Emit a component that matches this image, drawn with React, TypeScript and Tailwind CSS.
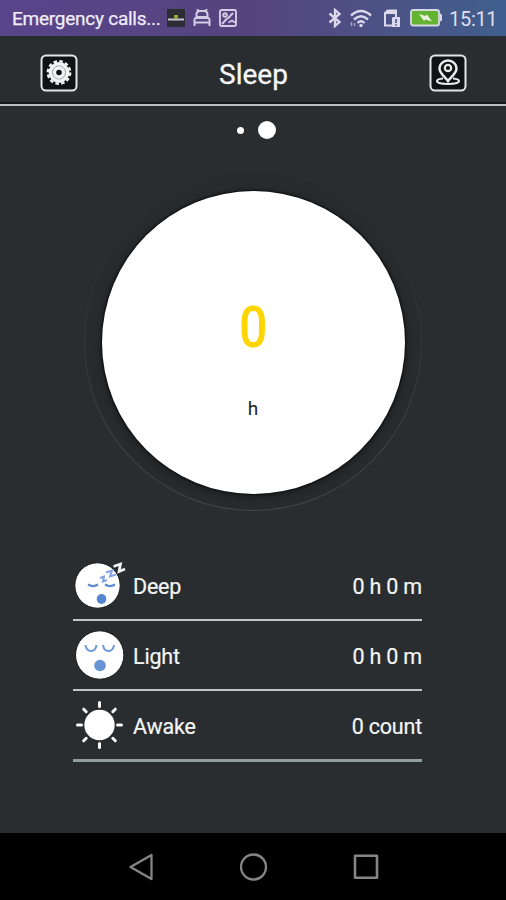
import type { ReactNode } from 'react';

function StatusBar() {
  return (
    <header className="flex h-[36px] shrink-0 items-center bg-linear-to-r from-[#58448a] via-[#55447f] via-50% to-[#3f5f8d] pl-[12px] pr-[9px] text-[#e3def0]">
      <span className="w-[150px] whitespace-nowrap pt-[2px] text-[19px] leading-[36px] tracking-[-0.25px] text-[#f0edf8] [-webkit-text-stroke:0.25px_#f0edf8]">Emergency calls...</span>
      <svg className="ml-[5px]" width="18" height="18" viewBox="0 0 18 18">
        <path d="M0 0h18v18H0z" fill="#2e2c35" />
        <path d="M1 10.5h16" stroke="#c9c6cf" strokeWidth="2" />
        <path d="M7.200 6h3.600v3.500H7.200z" fill="#a4b52e" />
      </svg>
      <svg className="ml-[8px]" width="18" height="18" viewBox="0 0 18 18" fill="none" stroke="#d3cde5" strokeWidth="2">
        <path d="M4 0l2 2.5M14 0l-2 2.500M3.500 8V5.500q0-3.500 3.500-3.500h4q3.500 0 3.500 3.500V8z" />
        <path d="M1.500 17v-6q0-2 2-2h11q2 0 2 2v6M1 13.500h16" />
      </svg>
      <svg className="ml-[8px]" width="18" height="18" viewBox="0 0 18 18" fill="none" stroke="#d3cde5" strokeWidth="1.9">
        <rect x="1" y="1" width="16" height="16" rx="1.5" />
        <circle cx="6" cy="6" r="1.8" />
        <path d="M3 15l4.500-5 2-1L14 4M9.500 13.500l3.500-2 3 2" />
      </svg>
      <div className="flex-1" />
      <svg width="14" height="20" viewBox="0 0 14 20" fill="none" stroke="#dcd9ed" strokeWidth="2.3">
        <path d="M1.500 5.500l10 8.500L7 18V2l4.500 4-10 8.500" />
      </svg>
      <svg className="ml-[7px]" width="24" height="19" viewBox="0 0 24 19" fill="none" stroke="#dcd9ed" strokeWidth="2.4">
        <path d="M2 6.500q10-9 20 0M5 10.500q7-6.500 14 0M8.500 14q3.500-3.500 7 0" />
        <circle cx="12" cy="16.500" r="1.700" fill="#dcd9ed" stroke="none" />
        <path d="M2.500 17v-4M5.500 17v-3" stroke="#a9a3cf" strokeWidth="1.500" />
      </svg>
      <svg className="ml-[10px]" width="18" height="19" viewBox="0 0 18 19">
        <path d="M9 16.500H2V4l3-2.500h8V8" fill="none" stroke="#dcd9ed" strokeWidth="2" />
        <path d="M3 1.500h10V5H3z" fill="#dcd9ed" />
        <path d="M9 9l1-1h7v10H9z" fill="#dcd9ed" />
        <path d="M13 10v4M13 15.200v1.500" stroke="#51518a" strokeWidth="1.600" />
      </svg>
      <svg className="ml-[9px]" width="33" height="18" viewBox="0 0 33 18">
        <rect x="1" y="1" width="28" height="15.500" rx="2" fill="#62b32f" stroke="#d8d8e6" strokeWidth="1.800" />
        <path d="M30 4.500q2 0 2 2v4q0 2-2 2z" fill="#d8d8e6" />
        <path d="M9 5l6.500 2 1.500-1.500 5 7-6.500-2-1.500 1.500z" fill="#e8f0df" />
      </svg>
      <span className="ml-[6px] w-[48px] whitespace-nowrap pt-[2px] text-[20px] leading-[36px] tracking-[-0.3px] text-[#dedff0]">15:11</span>
    </header>
  );
}

function GearIcon() {
  return (
    <svg width="38" height="38" viewBox="0 0 38 38">
      <rect x="1.500" y="1.500" width="35" height="35" rx="4.500" fill="#101315" stroke="#e4e6e6" strokeWidth="2" />
      <circle cx="19" cy="18.500" r="11.200" fill="none" stroke="#f2f3f3" strokeWidth="2.400" strokeDasharray="3.500 2.365" />
      <circle cx="19" cy="18.500" r="8" fill="none" stroke="#f2f3f3" strokeWidth="4.800" />
      <circle cx="19" cy="18.500" r="6.600" fill="none" stroke="#8a8d8e" strokeWidth="0.800" />
      <circle cx="19" cy="18.500" r="4.400" fill="none" stroke="#f2f3f3" strokeWidth="3.200" />
    </svg>
  );
}

function PlaceIcon() {
  return (
    <svg width="38" height="38" viewBox="0 0 38 38" fill="none" stroke="#e9ebeb" strokeWidth="2.200">
      <rect x="1.500" y="1.500" width="35" height="35" rx="4.500" fill="#101315" stroke="#e4e6e6" strokeWidth="2" />
      <path d="M14 24.500c-4 .3-6 1.300-6 2.600 0 1.900 5 2.900 11 2.900s11-1 11-2.900c0-1.300-2-2.300-6-2.600" />
      <path d="M19 27c-2-3-8.500-7.500-8.500-12.500a8.500 8 0 0 1 17 0c0 5-6.500 9.500-8.500 12.500z" strokeWidth="2.500" />
      <circle cx="19" cy="14" r="3.200" />
    </svg>
  );
}

function DeepIcon() {
  return (
    <svg width="56" height="50" viewBox="0 0 56 50" fill="none">
      <circle cx="24.500" cy="25.500" r="22.700" fill="#fff" stroke="#171a1c" strokeWidth="1" />
      <path d="M15 24.500q5 3.200 10 0M32 24.500q5 3.200 10 0" stroke="#5f8bd0" strokeWidth="2.200" />
      <ellipse cx="28.500" cy="39" rx="4.800" ry="5" fill="#5485d1" />
      <path d="M27 18l4-1.500-1 5 4-1.500M33 12.500l6-2-2 6 6-2" stroke="#82a4e4" strokeWidth="2" />
      <path d="M42 7.500l7-2.500-1.500 7.500 6-2.500" stroke="#f1f3f3" strokeWidth="2.700" transform="translate(-1.500 -1)" />
    </svg>
  );
}

function LightIcon() {
  return (
    <svg width="56" height="50" viewBox="0 0 56 50" fill="none">
      <circle cx="26.700" cy="25" r="24.200" fill="#fff" stroke="#171a1c" strokeWidth="1" />
      <path d="M12.500 15c1 8 10 8 11 0M30 15c1 8 10 8 11 0" stroke="#6d99d8" strokeWidth="2" />
      <circle cx="27" cy="35.500" r="5.800" fill="#6694d5" />
    </svg>
  );
}

function AwakeIcon() {
  return (
    <svg width="56" height="50" viewBox="0 0 56 50" stroke="#fafafa" strokeWidth="3" strokeLinecap="round">
      <circle cx="26.500" cy="25" r="15.200" fill="#fff" stroke="none" />
      <path d="M26.500 2.500v4M26.500 43.500v4M4.500 25h4M44.500 25h4M10.700 9.200l2.500 2.500M39.800 38.300l2.500 2.500M10.700 40.800l2.500-2.500M39.800 11.700l2.500-2.500" />
    </svg>
  );
}

function Row({ icon, name, value, last = false }: { icon: ReactNode; name: string; value: string; last?: boolean }) {
  return (
    <li className={`flex items-center text-[21.500px] text-[#f3f5f5] ${last ? 'h-[71px] border-b-3 border-[#929d9f]' : 'h-[70px] border-b-2 border-[#c0c5c5]'}`}>
      {icon}
      <span className="ml-[4px] flex-1 pt-[4px] tracking-[-0.2px] [-webkit-text-stroke:0.2px_#f3f5f5]">{name}</span>
      <span className="pt-[4px] tracking-[-0.2px] [-webkit-text-stroke:0.2px_#f3f5f5]">{value}</span>
    </li>
  );
}

export default function App() {
  return (
    <div className="flex h-[900px] w-[506px] flex-col overflow-hidden bg-[#292d30] font-['Roboto','Liberation_Sans',sans-serif]">
      <StatusBar />
      <nav className="flex h-[70px] shrink-0 items-center justify-between border-b-2 border-[#b9bebe] pl-[40px] pr-[39px] pt-[6px] shadow-[inset_0_-2px_0_#15181a]">
        <GearIcon />
        <h1 className="pt-[4px] text-[28px] leading-[36px] text-[#f5f6f6] [-webkit-text-stroke:0.3px_#f5f6f6]">Sleep</h1>
        <PlaceIcon />
      </nav>
      <main className="flex flex-1 flex-col items-center">
        <div className="flex h-[48px] w-full items-center justify-center gap-[14px] pl-[7px]">
          <i className="size-[7px] rounded-full bg-white" />
          <i className="size-[18px] rounded-full bg-white" />
        </div>
        <section className="mt-[19px] flex size-[338px] items-center justify-center rounded-full bg-linear-to-b from-[#24282b] to-[#43484b] p-px">
          <div className="flex size-full items-center justify-center rounded-full bg-[#282c2f]">
            <div className="flex size-[303px] flex-col items-center rounded-full bg-white shadow-[0_0_2px_1px_#0b0d0e,0_3px_12px_#1a1d1f]">
              <span className="mt-[108px] scale-x-[0.88] text-[57px] font-medium leading-[58px] text-[#ffd500]">0</span>
              <span className="mt-[40px] text-[19px] leading-[24px] text-[#202325]">h</span>
            </div>
          </div>
        </section>
        <ul className="-ml-[11px] mt-[40px] w-[349px]">
          <Row icon={<DeepIcon />} name="Deep" value="0 h 0 m" />
          <Row icon={<LightIcon />} name="Light" value="0 h 0 m" />
          <Row icon={<AwakeIcon />} name="Awake" value="0 count" last />
        </ul>
      </main>
      <footer className="flex h-[67px] shrink-0 items-center justify-between bg-black pl-[127px] pr-[126px]">
        <svg width="28" height="28" viewBox="0 0 28 28" fill="none" stroke="#858585" strokeWidth="2.300" strokeLinejoin="round">
          <path d="M3.500 14L24.500 2v24z" />
        </svg>
        <svg width="28" height="28" viewBox="0 0 28 28" fill="none" stroke="#858585" strokeWidth="2.300">
          <circle cx="13.500" cy="14" r="12.500" />
        </svg>
        <svg width="28" height="28" viewBox="0 0 28 28" fill="none" stroke="#858585" strokeWidth="2.600" strokeLinejoin="round">
          <path d="M3 2.800h22v22H3z" />
        </svg>
      </footer>
    </div>
  );
}
